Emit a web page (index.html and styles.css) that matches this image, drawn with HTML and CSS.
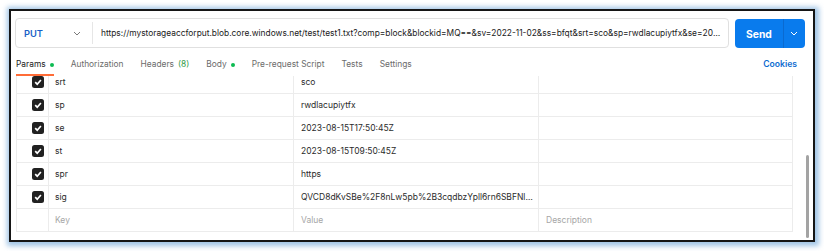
FILE: index.html
```html
<!DOCTYPE html>
<html lang="en">
<head>
    <meta charset="UTF-8">
    <title>PUT Block Request</title>
    <link rel="stylesheet" href="styles.css">
</head>
<body>
    <div class="frame">
        <div class="request-row">
            <div class="url-box">
                <div class="method">
                    <span class="method-name">PUT</span>
                    <svg class="chevron" width="8" height="5" viewBox="0 0 8 5"><path d="M1 1 L4 4 L7 1" fill="none" stroke="#7a7a7a" stroke-width="1"/></svg>
                </div>
                <div class="url-text">https://mystorageaccforput.blob.core.windows.net/test/test1.txt?comp=block&amp;blockid=MQ==&amp;sv=2022-11-02&amp;ss=bfqt&amp;srt=sco&amp;sp=rwdlacupiytfx&amp;se=2023-08-15T17:50:45Z&amp;st=2023-08-15T09:50:45Z</div>
            </div>
            <div class="send-btn">
                <span class="send-label">Send</span>
                <span class="send-arrow">
                    <svg width="8" height="5" viewBox="0 0 8 5"><path d="M1 1 L4 4 L7 1" fill="none" stroke="#fff" stroke-width="1"/></svg>
                </span>
            </div>
        </div>

        <div class="tabs">
            <span class="tab active">Params <i class="dot"></i></span>
            <span class="tab">Authorization</span>
            <span class="tab">Headers <span class="count">(8)</span></span>
            <span class="tab">Body <i class="dot"></i></span>
            <span class="tab">Pre-request Script</span>
            <span class="tab">Tests</span>
            <span class="tab">Settings</span>
            <span class="cookies">Cookies</span>
        </div>

        <div class="params-area">
            <div class="params-table">
                <div class="param-row">
                    <div class="cell check-cell"><span class="checkbox"><svg width="12" height="12" viewBox="0 0 12 12"><path d="M3.2 6.2 L5.2 8.2 L8.9 4" fill="none" stroke="#fff" stroke-width="1.7"/></svg></span></div>
                    <div class="cell">srt</div>
                    <div class="cell">sco</div>
                    <div class="cell"></div>
                </div>
                <div class="param-row">
                    <div class="cell check-cell"><span class="checkbox"><svg width="12" height="12" viewBox="0 0 12 12"><path d="M3.2 6.2 L5.2 8.2 L8.9 4" fill="none" stroke="#fff" stroke-width="1.7"/></svg></span></div>
                    <div class="cell">sp</div>
                    <div class="cell">rwdlacupiytfx</div>
                    <div class="cell"></div>
                </div>
                <div class="param-row">
                    <div class="cell check-cell"><span class="checkbox"><svg width="12" height="12" viewBox="0 0 12 12"><path d="M3.2 6.2 L5.2 8.2 L8.9 4" fill="none" stroke="#fff" stroke-width="1.7"/></svg></span></div>
                    <div class="cell">se</div>
                    <div class="cell">2023-08-15T17:50:45Z</div>
                    <div class="cell"></div>
                </div>
                <div class="param-row">
                    <div class="cell check-cell"><span class="checkbox"><svg width="12" height="12" viewBox="0 0 12 12"><path d="M3.2 6.2 L5.2 8.2 L8.9 4" fill="none" stroke="#fff" stroke-width="1.7"/></svg></span></div>
                    <div class="cell">st</div>
                    <div class="cell">2023-08-15T09:50:45Z</div>
                    <div class="cell"></div>
                </div>
                <div class="param-row">
                    <div class="cell check-cell"><span class="checkbox"><svg width="12" height="12" viewBox="0 0 12 12"><path d="M3.2 6.2 L5.2 8.2 L8.9 4" fill="none" stroke="#fff" stroke-width="1.7"/></svg></span></div>
                    <div class="cell">spr</div>
                    <div class="cell">https</div>
                    <div class="cell"></div>
                </div>
                <div class="param-row">
                    <div class="cell check-cell"><span class="checkbox"><svg width="12" height="12" viewBox="0 0 12 12"><path d="M3.2 6.2 L5.2 8.2 L8.9 4" fill="none" stroke="#fff" stroke-width="1.7"/></svg></span></div>
                    <div class="cell">sig</div>
                    <div class="cell">QVCD8dKvSBe%2F8nLw5pb%2B3cqdbzYpll6rn6SBFNlzIx4aQ%3D</div>
                    <div class="cell"></div>
                </div>
                <div class="param-row">
                    <div class="cell check-cell"></div>
                    <div class="cell placeholder">Key</div>
                    <div class="cell placeholder">Value</div>
                    <div class="cell placeholder">Description</div>
                </div>
            </div>
            <div class="scroll-track"><div class="scroll-thumb"></div></div>
        </div>
    </div>
</body>
</html>
```

FILE: styles.css
```css
body {
    margin: 0;
    background: #fff;
    font-family: Inter, "Noto Sans", sans-serif;
    color: #212121;
}
.frame {
    margin: 9px;
    width: 802px;
    height: 229px;
    border: 2px solid #151515;
    box-shadow: 1px 1px 5px 3px rgba(130, 178, 222, 0.75);
    background: #fff;
    overflow: hidden;
}
.request-row {
    display: flex;
    gap: 6px;
    padding: 7px 6px 0 4px;
}
.url-box {
    display: flex;
    align-items: center;
    width: 714px;
    height: 30px;
    border: 1px solid #e0e0e0;
    border-radius: 4px;
    box-sizing: border-box;
}
.method {
    display: flex;
    align-items: center;
    justify-content: space-between;
    width: 77px;
    height: 22px;
    padding: 0 11px 0 8px;
    box-sizing: border-box;
    border-right: 1px solid #e6e6e6;
}
.method-name {
    color: #1a5fc7;
    font-size: 9.3px;
    font-weight: 600;
}
.url-text {
    flex: 1;
    padding: 0 6px 0 8px;
    font-size: 8.4px;
    white-space: nowrap;
    overflow: hidden;
    text-overflow: ellipsis;
}
.send-btn {
    display: flex;
    align-items: stretch;
    width: 70px;
    height: 29px;
    margin-top: 1px;
    background: #097bed;
    border-radius: 4px;
    color: #fff;
}
.send-label {
    display: flex;
    align-items: center;
    flex: 0 0 auto;
    padding: 0 11px;
    font-size: 10.3px;
    font-weight: 700;
}
.send-arrow {
    display: flex;
    align-items: center;
    justify-content: center;
    flex: 1;
    border-left: 1px solid #0a6ad0;
}
.tabs {
    display: flex;
    gap: 17px;
    height: 24px;
    margin-top: 4px;
    padding: 0 0 0 5px;
}
.tab {
    display: flex;
    align-items: center;
    gap: 4px;
    padding: 6px 0 3px;
    line-height: 13px;
    height: 13px;
    font-size: 8.4px;
    color: #6b6b6b;
    border-bottom: 2px solid transparent;
}
.tab.active {
    color: #212121;
    border-bottom-color: #ff6c37;
}
.dot {
    width: 4px;
    height: 4px;
    border-radius: 50%;
    background: #0cbb52;
}
.count {
    color: #2f9a48;
}
.cookies {
    margin-left: auto;
    margin-right: 16px;
    padding-top: 6px;
    line-height: 13px;
    font-size: 8.6px;
    font-weight: 600;
    color: #0b6bd0;
}
.params-area {
    display: flex;
    height: 164px;
    overflow: hidden;
}
.params-table {
    margin: -5px 0 0 5px;
    width: 777px;
    border-left: 1px solid #ececec;
    border-right: 1px solid #ececec;
    box-sizing: border-box;
    align-self: flex-start;
}
.param-row {
    display: grid;
    grid-template-columns: 31px 245px 245px 1fr;
    height: 23px;
    border-bottom: 1px solid #ececec;
    box-sizing: border-box;
}
.cell {
    display: flex;
    align-items: center;
    padding: 0 8px 0 6px;
    font-size: 8.5px;
    color: #2b2b2b;
    border-left: 1px solid #ececec;
    white-space: nowrap;
    overflow: hidden;
}
.cell:nth-child(3),
.cell:nth-child(4) {
    padding-left: 7px;
}
.cell:nth-child(3) {
    display: block;
    padding-right: 1px;
    line-height: 22px;
    text-overflow: ellipsis;
}
.check-cell {
    border-left: none;
    padding: 0 0 0 15px;
}
.checkbox {
    display: flex;
    width: 12px;
    height: 12px;
    border-radius: 2.5px;
    background: #212121;
}
.placeholder {
    color: #a6a6a6;
}
.scroll-track {
    margin-left: 13px;
    width: 3px;
}
.scroll-thumb {
    margin-top: 79px;
    height: 83px;
    border-radius: 2px;
    background: #a3a3a3;
}
```
